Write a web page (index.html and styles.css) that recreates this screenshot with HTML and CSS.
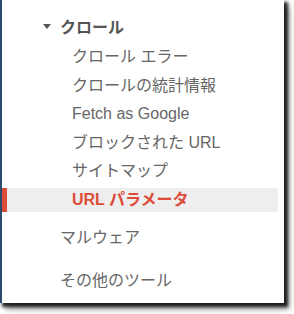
FILE: index.html
```html
<!DOCTYPE html>
<html lang="ja">
<head>
    <meta charset="UTF-8">
    <title>クロール</title>
    <link rel="stylesheet" href="styles.css">
</head>
<body>
    <div class="frame">
        <div class="panel">
            <div class="section-title">
                <span class="caret"></span>
                <span>クロール</span>
            </div>
            <ul class="sub-menu">
                <li>クロール エラー</li>
                <li>クロールの統計情報</li>
                <li>Fetch as Google</li>
                <li>ブロックされた URL</li>
                <li>サイトマップ</li>
                <li class="active">URL パラメータ</li>
            </ul>
            <div class="menu-item malware">マルウェア</div>
            <div class="menu-item tools">その他のツール</div>
        </div>
    </div>
</body>
</html>
```

FILE: styles.css
```css
html,
body {
    margin: 0;
    padding: 0;
    background: #ffffff;
}

body {
    font-family: "Liberation Sans", "Noto Sans CJK JP", sans-serif;
    color: #666666;
}

.frame {
    width: 294px;
    height: 314px;
    overflow: hidden;
}

.panel {
    box-sizing: border-box;
    width: 284px;
    height: 303px;
    padding-top: 14px;
    background: #ffffff;
    border-left: 2px solid #2b4a6f;
    box-shadow: 3px 3px 3px 1px rgba(0, 0, 0, 0.8), 5px 6px 6px rgba(0, 0, 0, 0.4);
}

.section-title {
    display: flex;
    align-items: center;
    height: 24px;
    padding-left: 41px;
    font-size: 16px;
    font-weight: bold;
    color: #555555;
}

.caret {
    width: 0;
    height: 0;
    border-left: 4px solid transparent;
    border-right: 4px solid transparent;
    border-top: 5px solid #555555;
    margin-right: 9px;
}

.sub-menu {
    list-style: none;
    margin: 7px 0 0 0;
    padding: 0;
    display: flex;
    flex-direction: column;
    gap: 4.6px;
}

.sub-menu li {
    line-height: 24px;
    font-size: 16px;
    padding-left: 70px;
    margin-right: 6px;
}

.sub-menu li.active {
    padding-left: 65px;
    border-left: 5px solid #dd4b39;
    background: #eeeeee;
    color: #dd4b39;
    font-weight: bold;
}

.menu-item {
    line-height: 24px;
    font-size: 16px;
    padding-left: 58px;
}

.malware {
    margin-top: 14px;
}

.tools {
    margin-top: 19px;
}
```
